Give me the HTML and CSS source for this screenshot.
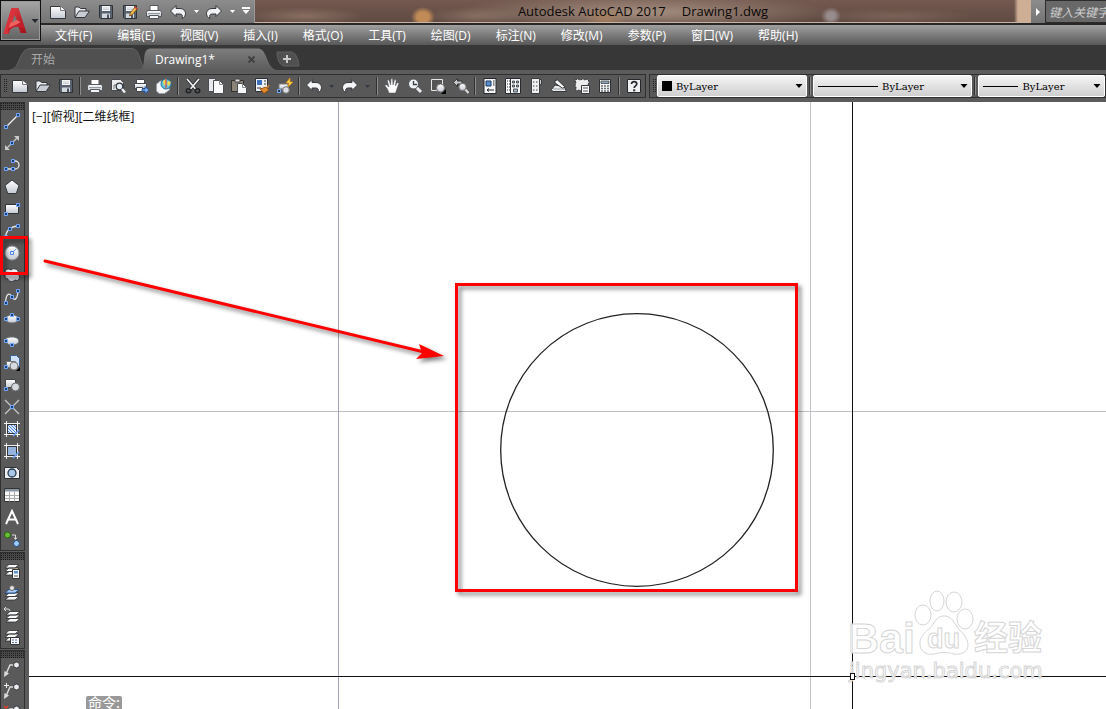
FILE: index.html
```html
<!DOCTYPE html>
<html lang="zh-CN">
<head>
<meta charset="utf-8">
<title>Autodesk AutoCAD 2017 - Drawing1.dwg</title>
<link rel="stylesheet" href="styles.css">
</head>
<body>
<svg class="defs" aria-hidden="true">
  <defs>
    <linearGradient id="g-white" x1="0" y1="0" x2="0" y2="1"><stop offset="0" stop-color="#fff"/><stop offset="1" stop-color="#c3c8d2"/></linearGradient>
    <linearGradient id="g-red" x1="0" y1="0" x2="1" y2="1"><stop offset="0" stop-color="#e8454a"/><stop offset="1" stop-color="#a30f18"/></linearGradient>
    <linearGradient id="g-tab" x1="0" y1="0" x2="0" y2="1"><stop offset="0" stop-color="#7e7e7e"/><stop offset="1" stop-color="#5c5c5c"/></linearGradient>
    <pattern id="hatch" width="3" height="3" patternUnits="userSpaceOnUse"><path fill="#dce8fb" d="M0 0h3v3H0z"/><path stroke="#4d7fd0" d="M0 0l3 3"/></pattern>
  </defs>
  <symbol id="new" viewBox="0 0 16 16"><path d="M.5 2.500h10l5 4v8H.5z" fill="url(#g-white)" stroke="#34373c"/><path d="M10.500 2.500v4h5" fill="#fff" stroke="#777"/></symbol>
  <symbol id="open" viewBox="0 0 16 16"><path d="M1 13V3h4l1.500 1.500H12V7" fill="#e8eaee" stroke="#34373c"/><path d="M1 13.500L5 7h10.500L11 13.500z" fill="#c8ccd4" stroke="#34373c"/></symbol>
  <symbol id="save" viewBox="0 0 16 16"><path d="M1.500 1.500h13v13h-12l-1-1z" fill="#59626f" stroke="#2f3338"/><path d="M4 2h8v5H4z" fill="#f4f6f8"/><path d="M5 4h6M5 5.500h6" stroke="#b5bbc5" stroke-width=".7"/><path d="M4 9.500h8V14H4z" fill="#d3d7de"/><path d="M9 10.500h2V14H9z" fill="#4b5361"/></symbol>
  <symbol id="saveas" viewBox="0 0 16 16"><use href="#save"/><path d="M7.500 12l1-3.500 5-6 2 2-5 6z" fill="#f3bd4e" stroke="#6f4215" stroke-width=".8"/><path d="M13 3l2 2" stroke="#d33" stroke-width="1.500"/></symbol>
  <symbol id="print" viewBox="0 0 16 16"><path d="M4 1.500h8V7H4z" fill="#fff" stroke="#55595f"/><path d="M1.500 6.500h13l1 2v4H.5v-4z" fill="url(#g-white)" stroke="#55595f"/><path d="M3.500 11.500h9v3h-9z" fill="#f3f4f6" stroke="#55595f"/><path d="M2 9.500h12" stroke="#9298a2"/></symbol>
  <symbol id="preview" viewBox="0 0 16 16"><path d="M1.500 1.500h9l3 3v8h-12z" fill="#e9ebef" stroke="#44484e"/><path d="M4 11V7h3" fill="none" stroke="#777"/><circle cx="9.500" cy="8.500" r="3.300" fill="#e4edf6" stroke="#33373d" stroke-width="1.300"/><path d="M12 11l3 3.500" stroke="#eef0f3" stroke-width="2.400"/></symbol>
  <symbol id="publish" viewBox="0 0 16 16"><path d="M3.500 1.500h8V6h-8z" fill="#fff" stroke="#44484e"/><path d="M1.500 5.500h12v5h-12z" fill="url(#g-white)" stroke="#44484e"/><path d="M3.500 9.500h6v4h-6z" fill="#fff" stroke="#44484e"/><path d="M9 11h3V8.500l4 3.700-4 3.300V13H9z" fill="#7eb0f3" stroke="#184c9c" stroke-width=".8"/></symbol>
  <symbol id="globe" viewBox="0 0 16 16"><path d="M.5 6l4-3h7l2 9-5 3.500H3L.5 13z" fill="#f5f6f8" stroke="#999da5"/><circle cx="10" cy="6" r="5" fill="#5fc4e2" stroke="#24749f"/><path d="M7 3l3-2v4L8 8zM12 3l3 1-2 4-2-2z" fill="#f3da46"/><path d="M10 .5v10" stroke="#e5483b" stroke-width="1.200"/></symbol>
  <symbol id="cut" viewBox="0 0 16 16"><path d="M2 1l9 10.500M14 1L5 11.500" stroke="#222528" stroke-width="3.200"/><path d="M2 1l9 10.500M14 1L5 11.500" stroke="#f2f3f5" stroke-width="1.700"/><g fill="none" stroke="#1f2225" stroke-width="1.500"><ellipse cx="3.500" cy="12.800" rx="2.200" ry="2"/><ellipse cx="12.500" cy="12.800" rx="2.200" ry="2"/></g></symbol>
  <symbol id="copy" viewBox="0 0 16 16"><path d="M.5.5h6l3 3v10h-9z" fill="#e7e9ed" stroke="#4a4e54"/><path d="M5.500 2.500h6l4 4v9h-10z" fill="#fbfbfc" stroke="#4a4e54"/><path d="M11.500 2.500v4h4" fill="none" stroke="#888"/></symbol>
  <symbol id="paste" viewBox="0 0 16 16"><path d="M.5 2.500h12v11H.5z" fill="#8c8379" stroke="#34312d"/><path d="M4 1h5v3H4z" fill="#ddd" stroke="#444"/><path d="M6.500 5.500h5l4 4v6h-9z" fill="#f6f7f8" stroke="#4a4e54"/><path d="M11.500 5.500v4h4" fill="none" stroke="#888"/></symbol>
  <symbol id="match" viewBox="0 0 16 16"><path d="M1.500.5h12v13h-12z" fill="#eef2f8" stroke="#2a3036"/><path d="M3 2h5v5H3z" fill="#3b6fbc"/><path d="M10 3h2M10 6h2M3 10h4" stroke="#333"/><path d="M6 11l6-2 3 3-5 3.500z" fill="#e08a2d" stroke="#8a4308" stroke-width=".8"/><path d="M13 10l2-3" stroke="#b87533" stroke-width="2"/></symbol>
  <symbol id="blockedit" viewBox="0 0 16 16"><path d="M2 6h9v5H2z" fill="url(#g-white)" stroke="#777"/><circle cx="9" cy="12" r="3.300" fill="#dadde4" stroke="#777"/><path d="M.5 11.500h3v3h-3z" fill="#27374f" stroke="#78aaf8"/><path d="M13 0l-4 5h3l-1 4 5-5h-3z" fill="#ffdc55" stroke="#d98908" stroke-width=".7"/></symbol>
  <symbol id="undo" viewBox="0 0 16 16"><path d="M.5 7L6 1.500V4.500h4c3 0 5.500 2 5.500 5 0 2-1 4-3.500 5 1-3 0-4.500-2-4.500H6v2.500z" fill="#f3f4f6" stroke="#34373c"/></symbol>
  <symbol id="redo" viewBox="0 0 16 16"><use href="#undo" transform="matrix(-1 0 0 1 16 0)"/></symbol>
  <symbol id="pan" viewBox="0 0 16 16"><path d="M5 15l-1.500-4L.8 7.500l1.500-.8L5 9 3.300 2.500l1.500-.7L6.700 7 7 .8h1.600L9 7l1.700-5.500 1.500.5L11.300 8l2.200-3.500 1.300.8L13 10.500 11.500 15z" fill="#fff" stroke="#55585d" stroke-width=".5"/></symbol>
  <symbol id="zoomrt" viewBox="0 0 16 16"><path d="M9 9l5 5" stroke="#e9ebee" stroke-width="3"/><circle cx="6.500" cy="6" r="5" fill="#eef0f2" stroke="#4d5157"/><path d="M6.500 3v3.500H10" fill="none" stroke="#3b3e42" stroke-width="1.300"/></symbol>
  <symbol id="zoomwin" viewBox="0 0 16 16"><path d="M1.500 1.500h11v11h-11z" fill="#555" stroke="#e7e7e7"/><circle cx="10.500" cy="10" r="4" fill="url(#g-white)" stroke="#777"/><path d="M16 11v5h-5z" fill="#000"/></symbol>
  <symbol id="zoomprev" viewBox="0 0 16 16"><path d="M0 4.500L4.500.5v2.500H9v3H4.500v2.500z" fill="#c5c8cc" stroke="#333"/><path d="M12 11l3.500 4" stroke="#dedede" stroke-width="2"/><circle cx="9.500" cy="9" r="3.600" fill="url(#g-white)" stroke="#777"/></symbol>
  <symbol id="props" viewBox="0 0 16 16"><path d="M2 .5h12v15H2z" fill="#f5f6f8" stroke="#26292d"/><path d="M4 3h5v5H4z" fill="#5e8bc9" stroke="#173965"/><path d="M11 3h1.500M11 5h1.500M11 7h1.500M5 12h7M5 12l2-1.500M5 12l2 1.500" stroke="#26292d"/></symbol>
  <symbol id="dcenter" viewBox="0 0 16 16"><path d="M.5.5h15v15H.5z" fill="#f5f6f8" stroke="#26292d"/><path d="M2 3h3M2 6h3M2 9h3M2 12h3" stroke="#333" stroke-dasharray="1 1"/><path d="M5.500 1v14" stroke="#333"/><path d="M7.500 3h2v2h-2zM11.500 3h2v2h-2zM7.500 7h2v2h-2zM11.500 7h2v2h-2zM8.500 11h4v3h-4z" fill="#9fb2c8" stroke="#333" stroke-width=".8"/></symbol>
  <symbol id="palette" viewBox="0 0 16 16"><path d="M3.500.5h8v15h-8z" fill="#eff0f2" stroke="#3a3d42"/><path d="M11.500 1.500h2v5h-2z" fill="#ccc" stroke="#3a3d42"/><path d="M5 3h1.500v2H5zM8 3h1.500v2H8zM5 7h1.500v2H5zM8 7h1.500v2H8zM5 11h1.500v2H5zM8 11h1.500v2H8z" fill="#999"/></symbol>
  <symbol id="sheet" viewBox="0 0 16 16"><path d="M.5 11.500L4 7l9 1.500 2.500 5h-14z" fill="#e8eaed" stroke="#33363a"/><path d="M4 2.500L6.500 2l7 6.500-1.500 2L4 5z" fill="#fafafa" stroke="#33363a"/><path d="M2 11h12" stroke="#999"/></symbol>
  <symbol id="markup" viewBox="0 0 16 16"><path d="M1 2l3-1 2 1 3-1 2 1 3-1 1 3-1 3-2 2 0 3-4 1-3-1-3 1L2 9.500 1 7l1-2z" fill="#ececec" stroke="#34373c" stroke-dasharray="2 1"/><path d="M7.500 7.500h8v8h-8z" fill="#f7f7f8" stroke="#34373c"/><path d="M9 10h5M9 13h5" stroke="#555"/></symbol>
  <symbol id="calc" viewBox="0 0 16 16"><path d="M2.500 1.500h11v13h-11z" fill="#f3f4f5" stroke="#2d3034"/><path d="M4 3h8v2.500H4z" fill="#8da5bd" stroke="#333" stroke-width=".7"/><path d="M4 8h8M4 10.500h8M4 13h8" stroke="#6a6d72" stroke-width="1.400" stroke-dasharray="2 1"/></symbol>
  <symbol id="help" viewBox="0 0 16 16"><path d="M1.500 1.500h13v13h-13z" fill="#eff0f2" stroke="#25282c"/><path d="M5.500 6C5.500 2.800 11 3 10.800 6 10.700 8 8.200 7.700 8.200 10" fill="none" stroke="#25282c" stroke-width="1.700"/><path d="M7.200 11.300h2v2h-2z" fill="#25282c"/></symbol>
  <symbol id="node" viewBox="0 0 4 4"><path d="M.5.5h3v3h-3z" fill="#1c3d78" stroke="#75a9fb"/></symbol>
  <symbol id="line" viewBox="0 0 16 16"><path d="M2 14L14 2" stroke="#f1f1f1" stroke-width="1.300"/><use href="#node" x="0" y="12" width="4" height="4"/><use href="#node" x="12" y="0" width="4" height="4"/></symbol>
  <symbol id="xline" viewBox="0 0 16 16"><path d="M3 13L13 3" stroke="#c9c9c9" stroke-width="1.300"/><path d="M10 1h5v5zM1 10v5h5z" fill="#c9c9c9"/><use href="#node" x="6" y="6" width="4" height="4"/></symbol>
  <symbol id="pline" viewBox="0 0 16 16"><path d="M2 12h9a4 4 0 0 0 0-8H9" fill="none" stroke="#e6e6e6" stroke-width="1.300"/><use href="#node" x="0" y="10" width="4" height="4"/><use href="#node" x="7" y="10" width="4" height="4"/><use href="#node" x="7" y="2" width="4" height="4"/></symbol>
  <symbol id="polygon" viewBox="0 0 16 16"><path d="M8 1l7 5.500-2.700 8H3.700L1 6.500z" fill="url(#g-white)" stroke="#34373c"/></symbol>
  <symbol id="rect" viewBox="0 0 16 16"><path d="M1.500 3.500h13v9h-13z" fill="url(#g-white)" stroke="#2e3136"/><use href="#node" x="0" y="11" width="4" height="4"/><use href="#node" x="12" y="2" width="4" height="4"/></symbol>
  <symbol id="arc" viewBox="0 0 16 16"><path d="M1.500 14C2 7 8 3 14 3" fill="none" stroke="#e3e3e3" stroke-width="1.300"/><use href="#node" x="0" y="12" width="4" height="4"/><use href="#node" x="4" y="4" width="4" height="4"/><use href="#node" x="12" y="1" width="4" height="4"/></symbol>
  <symbol id="circle" viewBox="0 0 16 16"><circle cx="8" cy="8" r="7" fill="url(#g-white)" stroke="#8d9199"/><path d="M8 8l4-4" stroke="#5791ef"/><path d="M6.500 6.500h3v3h-3z" fill="#dfe9fa" stroke="#4b86e8"/></symbol>
  <symbol id="cloud" viewBox="0 0 16 16"><path d="M2 7C-.5 3 3 .5 7 3c3-3 9 0 7 4 3 3 1 8-3 6-3 3-7 1-7-1-3-.5-4-3-2-5z" fill="url(#g-white)" stroke="#34373c"/></symbol>
  <symbol id="spline" viewBox="0 0 16 16"><path d="M1.500 14C2 3 6 4 8 8c2 4 5.500 3 6-6" fill="none" stroke="#e6e6e6" stroke-width="1.300"/><use href="#node" x="0" y="12" width="4" height="4"/><use href="#node" x="6" y="6" width="4" height="4"/><use href="#node" x="12" y="0" width="4" height="4"/></symbol>
  <symbol id="ellipse" viewBox="0 0 16 16"><ellipse cx="8" cy="8" rx="6.500" ry="4" fill="url(#g-white)" stroke="#6b6f75"/><use href="#node" x="0" y="6" width="4" height="4"/><use href="#node" x="6" y="2" width="4" height="4"/><use href="#node" x="12" y="6" width="4" height="4"/></symbol>
  <symbol id="ellarc" viewBox="0 0 16 16"><path d="M2 9C0 5 4 4 8 4c9 0 9 8 0 8C5 12 3 11 2 9z" fill="url(#g-white)" stroke="#6b6f75"/><use href="#node" x="0" y="6" width="4" height="4"/><use href="#node" x="6" y="10" width="4" height="4"/></symbol>
  <symbol id="insert" viewBox="0 0 16 16"><path d="M6.500.5h6l3 3v8h-9z" fill="#cfe0f7" stroke="#376396"/><path d="M2.500 6.500h9v6h-9z" fill="url(#g-white)" stroke="#777"/><circle cx="10" cy="11" r="4" fill="#d6d9df" stroke="#777"/><use href="#node" x="0" y="10" width="4" height="4"/><path d="M16 12v4h-4z" fill="#000"/></symbol>
  <symbol id="block" viewBox="0 0 16 16"><path d="M1.500 2.500h10v8h-10z" fill="url(#g-white)" stroke="#444"/><circle cx="11.500" cy="10" r="4" fill="#d6d9df" stroke="#666"/><use href="#node" x="0" y="10" width="4" height="4"/></symbol>
  <symbol id="point" viewBox="0 0 16 16"><path d="M1 1l14 14M1 15L15 1" stroke="#c9c9c9" stroke-width="1.200"/><use href="#node" x="6" y="6" width="4" height="4"/></symbol>
  <symbol id="hatchi" viewBox="0 0 16 16"><path d="M2.500 0v16M13.500 0v16M0 2.500h16M0 13.500h16" stroke="#f0f0f0"/><path d="M3.500 3.500h9v9h-9z" fill="url(#hatch)" stroke="#333"/><path d="M9 15l6-6" stroke="#68a0ff" stroke-width="1.500"/></symbol>
  <symbol id="gradi" viewBox="0 0 16 16"><path d="M2.500 0v16M13.500 0v16M0 2.500h16M0 13.500h16" stroke="#f0f0f0"/><path d="M3.500 3.500h9v9h-9z" fill="#94b3dd" stroke="#333"/><path d="M9 15l6-6" stroke="#68a0ff" stroke-width="1.500"/></symbol>
  <symbol id="region" viewBox="0 0 16 16"><path d="M.5 2.500h12l3 3v8H.5z" fill="#eceef1" stroke="#2c3035"/><circle cx="8" cy="8" r="4" fill="#a9c7e8" stroke="#26384e" stroke-width="1.300"/></symbol>
  <symbol id="table" viewBox="0 0 16 16"><path d="M.5 1.500h15v13H.5z" fill="#f8f8f8" stroke="#333"/><path d="M1 2h14v2.500H1z" fill="#8a95a4"/><path d="M5.500 4.500v10M10.500 4.500v10M1 8.500h14M1 11.500h14" stroke="#aaa"/></symbol>
  <symbol id="mtext" viewBox="0 0 16 16"><path d="M2 15L8 2l6 13M4.500 10.500h7" fill="none" stroke="#fff" stroke-width="2"/></symbol>
  <symbol id="addsel" viewBox="0 0 16 16"><circle cx="3.500" cy="4" r="3" fill="#69bd36" stroke="#24640c"/><circle cx="12.500" cy="12.500" r="3" fill="#9ecbff" stroke="#20497d"/><path d="M8 4h3.500v4M10 6.500l1.500 2 1.500-2" fill="none" stroke="#ddd"/></symbol>
  <symbol id="stack" viewBox="0 0 16 16"><path d="M5 8.500h10L11 12H1zM5 5h10l-4 3.500H1zM5 1.500h10L11 5H1z" fill="#fafafa" stroke="#2b2e32" stroke-width=".8"/></symbol>
  <symbol id="layerp" viewBox="0 0 16 16"><use href="#stack" width="16" height="16"/><path d="M8.500 6.500h7v9h-7z" fill="#f2f5fa" stroke="#333"/><path d="M10 8h4v2.500h-4z" fill="#5e93d7"/><path d="M10 13h4" stroke="#555"/></symbol>
  <symbol id="layercur" viewBox="0 0 16 16"><use href="#stack" y="3" width="16" height="16"/><path d="M5 4.500h10L11 8H1z" fill="#a7cbf7" stroke="#24528c"/><circle cx="8" cy="3" r="2.500" fill="#e6e6e6" stroke="#666"/></symbol>
  <symbol id="layerprev" viewBox="0 0 16 16"><use href="#stack" x="1" y="3" width="16" height="16"/><path d="M0 2h4q2 0 2 2M0 2l2-2M0 2l2 2" fill="none" stroke="#ddd"/></symbol>
  <symbol id="layerst" viewBox="0 0 16 16"><use href="#stack" width="16" height="16"/><path d="M6.500 8.500h9v7h-9z" fill="#f5f5f5" stroke="#333"/><path d="M8 11h6M8 13.500h6" stroke="#5877a8" stroke-dasharray="2 1"/></symbol>
  <symbol id="leader" viewBox="0 0 16 16"><path d="M2 13L6 4h5" fill="none" stroke="#ddd" stroke-width="1.400"/><path d="M0 16l.5-6L5 12.500z" fill="#ddd"/><circle cx="12.500" cy="4" r="3" fill="#e9ebef" stroke="#34373c"/></symbol>
  <symbol id="leaderadd" viewBox="0 0 16 16"><use href="#leader" width="16" height="16"/><path d="M0 2.500h5M2.500 0v5" stroke="#eee"/></symbol>
  <symbol id="leaderdel" viewBox="0 0 16 16"><use href="#leader" width="16" height="16"/><path d="M0 1l4 4M4 1L0 5" stroke="#e33e22" stroke-width="1.300"/></symbol>
  <symbol id="down" viewBox="0 0 7 4"><path d="M0 0h7L3.500 4z" fill="currentColor"/></symbol>
</svg>

<header class="header">
  <button class="app-button" aria-label="应用程序菜单">
    <svg class="app-logo" viewBox="0 0 24 28" aria-hidden="true"><path d="M8 1h7l8 25h-6l-2-6c-3-1-6 0-8 2l-2 5H0z" fill="url(#g-red)"/><path d="M11 8l-4 9c3-2 5-2 8-1z" fill="#777"/><path d="M8 1l5 1-4 12-5 13H0z" fill="#d9323a"/><path d="M5 20c5-5 10-5 15-2l1 4c-6-4-11-3-17 3z" fill="#c41f2a"/><path d="M7 16l6-3 4 2-3 2-9 4z" fill="#ee6260"/></svg>
    <svg class="arrow" aria-hidden="true"><use href="#down"/></svg>
  </button>
  <div class="titlebar">
    <div class="quick">
      <button class="q" aria-label="新建"><svg class="icon"><use href="#new"/></svg></button>
      <button class="q" aria-label="打开"><svg class="icon"><use href="#open"/></svg></button>
      <button class="q" aria-label="保存"><svg class="icon"><use href="#save"/></svg></button>
      <button class="q" aria-label="另存为"><svg class="icon"><use href="#saveas"/></svg></button>
      <button class="q" aria-label="打印"><svg class="icon"><use href="#print"/></svg></button>
      <button class="q" aria-label="放弃"><svg class="icon"><use href="#undo"/></svg></button>
      <button class="q q-small" aria-label="放弃列表"><svg class="tiny"><use href="#down"/></svg></button>
      <button class="q" aria-label="重做"><svg class="icon"><use href="#redo"/></svg></button>
      <button class="q q-small" aria-label="重做列表"><svg class="tiny"><use href="#down"/></svg></button>
      <button class="q q-menu" aria-label="自定义快速访问工具栏"><svg class="arrow"><use href="#down"/></svg></button>
    </div>
    <div class="caption"><span>Autodesk AutoCAD 2017</span><span>Drawing1.dwg</span></div>
    <div class="search">
      <button class="search-toggle" aria-label="展开搜索"><svg class="side-arrow" viewBox="0 0 4 8"><path d="M0 0v8l4-4z" fill="#fff"/></svg></button>
      <input class="search-box" type="text" aria-label="搜索" placeholder="键入关键字或短语">
    </div>
  </div>
  <nav class="menu" aria-label="菜单栏">
    <button>文件(F)</button><button>编辑(E)</button><button>视图(V)</button><button>插入(I)</button><button>格式(O)</button><button>工具(T)</button><button>绘图(D)</button><button>标注(N)</button><button>修改(M)</button><button>参数(P)</button><button>窗口(W)</button><button>帮助(H)</button>
  </nav>
</header>

<div class="tabs">
  <button class="tab"><svg class="tab-shape" viewBox="0 0 140 22" preserveAspectRatio="none" aria-hidden="true"><path d="M0 22C11 21 8 1 20 .5h102c10 .5 6 20 17 21.500z" fill="#505050" stroke="#616161"/></svg><span>开始</span></button>
  <button class="tab tab-active"><svg class="tab-shape" viewBox="0 0 140 22" preserveAspectRatio="none" aria-hidden="true"><path d="M0 22C11 21 1 1 13 .5h107c10 .5 8 20 19 21.500z" fill="url(#g-tab)"/></svg><span>Drawing1*</span><svg class="close" viewBox="0 0 7 7" aria-hidden="true"><path d="M.5.5l6 6M6.500.5l-6 6" stroke="#404040" stroke-width="2"/></svg></button>
  <button class="tab-add" aria-label="新图形"><svg class="add-shape" viewBox="0 0 24 16"><path d="M1 1h14c4 0 7 5 8 14H9C4 15 1 9 1 1z" fill="#505050" stroke="#606060"/><path d="M7 8h8M11 4v8" stroke="#c9c9c9" stroke-width="2"/></svg></button>
</div>

<div class="toolbars">
  <div class="toolbar" role="toolbar" aria-label="标准">
    <span class="grip"></span>
    <button class="t" aria-label="新建"><svg class="icon"><use href="#new"/></svg></button>
    <button class="t" aria-label="打开"><svg class="icon"><use href="#open"/></svg></button>
    <button class="t" aria-label="保存"><svg class="icon"><use href="#save"/></svg></button>
    <span class="sep"></span>
    <button class="t" aria-label="打印"><svg class="icon"><use href="#print"/></svg></button>
    <button class="t" aria-label="打印预览"><svg class="icon"><use href="#preview"/></svg></button>
    <button class="t" aria-label="发布"><svg class="icon"><use href="#publish"/></svg></button>
    <button class="t" aria-label="三维打印"><svg class="icon"><use href="#globe"/></svg></button>
    <span class="sep"></span>
    <button class="t" aria-label="剪切"><svg class="icon"><use href="#cut"/></svg></button>
    <button class="t" aria-label="复制"><svg class="icon"><use href="#copy"/></svg></button>
    <button class="t" aria-label="粘贴"><svg class="icon"><use href="#paste"/></svg></button>
    <button class="t" aria-label="特性匹配"><svg class="icon"><use href="#match"/></svg></button>
    <button class="t" aria-label="块编辑器"><svg class="icon"><use href="#blockedit"/></svg></button>
    <span class="sep"></span>
    <button class="t" aria-label="放弃"><svg class="icon"><use href="#undo"/></svg></button>
    <button class="t t-small" aria-label="放弃列表"><svg class="tiny"><use href="#down"/></svg></button>
    <button class="t" aria-label="重做"><svg class="icon"><use href="#redo"/></svg></button>
    <button class="t t-small" aria-label="重做列表"><svg class="tiny"><use href="#down"/></svg></button>
    <span class="sep"></span>
    <button class="t" aria-label="平移"><svg class="icon"><use href="#pan"/></svg></button>
    <button class="t" aria-label="实时缩放"><svg class="icon"><use href="#zoomrt"/></svg></button>
    <button class="t" aria-label="窗口缩放"><svg class="icon"><use href="#zoomwin"/></svg></button>
    <button class="t" aria-label="缩放上一个"><svg class="icon"><use href="#zoomprev"/></svg></button>
    <span class="sep"></span>
    <button class="t" aria-label="特性"><svg class="icon"><use href="#props"/></svg></button>
    <button class="t" aria-label="设计中心"><svg class="icon"><use href="#dcenter"/></svg></button>
    <button class="t" aria-label="工具选项板"><svg class="icon"><use href="#palette"/></svg></button>
    <button class="t" aria-label="图纸集管理器"><svg class="icon"><use href="#sheet"/></svg></button>
    <button class="t" aria-label="标记集管理器"><svg class="icon"><use href="#markup"/></svg></button>
    <button class="t" aria-label="快速计算器"><svg class="icon"><use href="#calc"/></svg></button>
    <span class="sep"></span>
    <button class="t" aria-label="帮助"><svg class="icon"><use href="#help"/></svg></button>
  </div>
  <div class="toolbar toolbar-props" role="toolbar" aria-label="特性">
    <span class="grip"></span>
    <div class="combo combo-color"><span class="swatch"></span><select aria-label="颜色"><option>ByLayer</option></select><svg class="arrow"><use href="#down"/></svg></div>
    <span class="sep"></span>
    <div class="combo combo-type"><span class="stroke"></span><select aria-label="线型"><option>ByLayer</option></select><svg class="arrow"><use href="#down"/></svg></div>
    <span class="sep"></span>
    <div class="combo combo-weight"><span class="stroke"></span><select aria-label="线宽"><option>ByLayer</option></select><svg class="arrow"><use href="#down"/></svg></div>
  </div>
</div>

<main class="workspace">
  <aside class="side">
    <div class="panel" role="toolbar" aria-label="绘图">
      <span class="grip-h"></span>
      <button aria-label="直线"><svg class="icon"><use href="#line"/></svg></button>
      <button aria-label="构造线"><svg class="icon"><use href="#xline"/></svg></button>
      <button aria-label="多段线"><svg class="icon"><use href="#pline"/></svg></button>
      <button aria-label="多边形"><svg class="icon"><use href="#polygon"/></svg></button>
      <button aria-label="矩形"><svg class="icon"><use href="#rect"/></svg></button>
      <button aria-label="圆弧"><svg class="icon"><use href="#arc"/></svg></button>
      <button aria-label="圆"><svg class="icon"><use href="#circle"/></svg></button>
      <button aria-label="修订云线"><svg class="icon"><use href="#cloud"/></svg></button>
      <button aria-label="样条曲线"><svg class="icon"><use href="#spline"/></svg></button>
      <button aria-label="椭圆"><svg class="icon"><use href="#ellipse"/></svg></button>
      <button aria-label="椭圆弧"><svg class="icon"><use href="#ellarc"/></svg></button>
      <button aria-label="插入块"><svg class="icon"><use href="#insert"/></svg></button>
      <button aria-label="创建块"><svg class="icon"><use href="#block"/></svg></button>
      <button aria-label="点"><svg class="icon"><use href="#point"/></svg></button>
      <button aria-label="图案填充"><svg class="icon"><use href="#hatchi"/></svg></button>
      <button aria-label="渐变色"><svg class="icon"><use href="#gradi"/></svg></button>
      <button aria-label="面域"><svg class="icon"><use href="#region"/></svg></button>
      <button aria-label="表格"><svg class="icon"><use href="#table"/></svg></button>
      <button aria-label="多行文字"><svg class="icon"><use href="#mtext"/></svg></button>
      <button aria-label="添加选定对象"><svg class="icon"><use href="#addsel"/></svg></button>
    </div>
    <div class="panel" role="toolbar" aria-label="图层">
      <span class="grip-h"></span>
      <button aria-label="图层特性"><svg class="icon"><use href="#layerp"/></svg></button>
      <button aria-label="置为当前"><svg class="icon"><use href="#layercur"/></svg></button>
      <button aria-label="上一个图层"><svg class="icon"><use href="#layerprev"/></svg></button>
      <button aria-label="图层状态"><svg class="icon"><use href="#layerst"/></svg></button>
    </div>
    <div class="panel" role="toolbar" aria-label="多重引线">
      <span class="grip-h"></span>
      <button aria-label="多重引线"><svg class="icon"><use href="#leader"/></svg></button>
      <button aria-label="添加引线"><svg class="icon"><use href="#leaderadd"/></svg></button>
      <button aria-label="删除引线"><svg class="icon"><use href="#leaderdel"/></svg></button>
    </div>
  </aside>
  <section class="canvas" aria-label="绘图区">
    <svg class="drawing">
      <g shape-rendering="crispEdges">
        <path d="M0 309.500h3000" stroke="#bebec4"/>
        <path d="M309.500 0v3000" stroke="#a4a4b4"/>
        <path d="M781.500 0v3000" stroke="#c4c4c8"/>
        <path d="M0 574.500h3000M823.500 0v3000" stroke="#111"/>
      </g>
      <circle cx="608" cy="348" r="136.300" fill="none" stroke="#222" stroke-width="1.300"/>
      <g class="watermark">
        <text class="wm-latin" x="819" y="551">Bai</text>
        <text class="wm-cn" x="945" y="548">经验</text>
        <ellipse cx="894" cy="513" rx="8" ry="10"/><ellipse cx="908" cy="499" rx="7" ry="10"/><ellipse cx="925" cy="500" rx="8" ry="10"/><ellipse cx="936" cy="517" rx="8" ry="10"/>
        <path d="M915 514c-8 0-9 7-14 12-6 5-11 10-10 17 1 8 8 10 14 9 7-2 13-2 20 0 7 1 14-2 14-9 0-7-5-11-10-17-4-5-6-12-14-12z"/>
        <text class="wm-du" x="898" y="546">du</text>
        <text class="wm-url" x="820" y="576">jingyan.baidu.com</text>
      </g>
      <path d="M821.500 571.500h4v6h-4z" fill="#fff" stroke="#111" shape-rendering="crispEdges"/>
    </svg>
    <div class="view-controls"><button>[−]</button><button>[俯视]</button><button>[二维线框]</button></div>
    <output class="command">命令:</output>
  </section>
  <svg class="callouts" aria-hidden="true">
    <g fill="none" stroke="#f00" stroke-width="3">
      <path d="M1.500 135.500h25v36h-25z"/>
      <path d="M456.500 182.500h340v306h-340z"/>
      <path d="M45 159l379 91" stroke-linecap="round"/>
    </g>
    <path d="M444 254l-28 3 6-6-3-9z" fill="#f00"/>
  </svg>
</main>
</body>
</html>
```
FILE: styles.css
```css
* { box-sizing: border-box; }

body {
  margin: 0;
  height: 100vh;
  display: flex;
  flex-direction: column;
  overflow: hidden;
  background: #5c5c5c;
  font-family: "Open Sans", "Noto Sans CJK SC", sans-serif;
  font-size: 12px;
}

button {
  display: flex;
  align-items: center;
  justify-content: center;
  padding: 0;
  border: 0;
  background: none;
  color: inherit;
  font: inherit;
}

.defs { position: absolute; width: 0; height: 0; }
.icon { width: 16px; height: 16px; flex: none; }
.arrow { width: 8px; height: 4px; flex: none; }
.tiny { width: 5px; height: 3px; flex: none; }

/* Title and menu */
.header {
  display: grid;
  grid-template-columns: 41px 1fr;
  grid-template-rows: 25px 20px;
  flex: none;
  background: #5a5a5a;
}
.app-button {
  grid-row: 1 / 3;
  height: 41px;
  gap: 3px;
  border: 1px solid #111;
  background: linear-gradient(#a5a5a5, #636363);
  box-shadow: inset 0 0 0 1px #999;
  color: #26292e;
}
.app-logo { width: 25px; height: 28px; }
.titlebar {
  display: flex;
  min-width: 0;
  border-bottom: 2px solid #2a2625;
}
.quick {
  display: flex;
  flex: none;
  padding-left: 5px;
  background: linear-gradient(#8c8c8c, #747474);
  border-right: 1px solid #999;
  color: #fff;
}
.q { width: 24px; }
.q-small { width: 12px; }
.q-menu { width: 16px; }
.q-menu::before {
  content: "";
  position: absolute;
  width: 8px;
  height: 2px;
  margin-bottom: 8px;
  background: #fff;
}
.caption {
  flex: 1;
  display: flex;
  align-items: center;
  justify-content: center;
  gap: 16px;
  border-bottom: 1px solid #c9b3a5;
  white-space: nowrap;
  color: #0b0908;
  background:
    radial-gradient(12px 10px at 168px 17px, #c08b56 50%, transparent),
    radial-gradient(22px 10px at 350px 18px, #a5805f, transparent),
    radial-gradient(190px 18px at 50% 12px, #a58f80, transparent),
    radial-gradient(60px 9px at 50px 16px, #896e61, transparent),
    radial-gradient(50px 9px at 220px 16px, #846b5f, transparent),
    radial-gradient(10px 9px at 576px 16px, #978b8c 40%, transparent),
    radial-gradient(80px 8px at 640px 16px, #7b6257, transparent),
    linear-gradient(90deg, transparent calc(100% - 17px), #cfae96 calc(100% - 13px)),
    linear-gradient(#745950, #5f4a42);
  font-size: 13px;
}
.search { display: flex; flex: none; }
.search-toggle {
  width: 14px;
  background: linear-gradient(#8c8c8c, #747474);
}
.side-arrow { width: 4px; height: 8px; }
.search-box {
  width: 61px;
  padding: 0 0 0 3px;
  border: 1px solid #2c2c2c;
  border-right: 0;
  border-radius: 0;
  background: #686868;
  color: #ddd;
  font: italic 12px "Noto Sans CJK SC", sans-serif;
}
.search-box::placeholder { color: #cfcfcf; opacity: 1; }
.menu {
  display: flex;
  gap: 25px;
  padding-left: 14px;
  background: linear-gradient(#a0a0a0, #585858);
  color: #fff;
  white-space: nowrap;
}

/* File tabs */
.tabs {
  display: flex;
  align-items: flex-end;
  flex: none;
  height: 25px;
  padding-left: 10px;
  background: #373737;
}
.tab {
  position: relative;
  width: 128px;
  height: 22px;
  justify-content: flex-start;
  padding-left: 21px;
  color: #aaa;
}
.tab-active {
  width: 138px;
  padding-left: 17px;
  color: #fff;
}
.tab span { position: relative; }
.tab-shape {
  position: absolute;
  left: 0;
  top: 0;
  width: 140px;
  height: 22px;
}
.close {
  position: relative;
  width: 7px;
  height: 7px;
  margin: 0 21px 0 auto;
}
.tab-add { height: 19px; align-items: flex-start; }
.add-shape { width: 24px; height: 16px; }

/* Toolbars */
.toolbars {
  display: flex;
  gap: 3px;
  flex: none;
  padding: 4px 0;
}
.toolbar {
  display: flex;
  align-items: center;
  flex: none;
  height: 24px;
  border: 1px solid #303030;
  background: #585858;
}
.grip {
  width: 4px;
  height: 14px;
  margin: 0 1px 0 2px;
  background: conic-gradient(#222 25%, transparent 0) 0 0 / 2px 2px;
}
.t { width: 23px; height: 20px; }
.t-small { width: 13px; color: #343a44; }
.sep {
  width: 6px;
  height: 18px;
  background: linear-gradient(90deg, transparent 2px, #303030 2px, #303030 3px, #8c8c8c 3px, #8c8c8c 4px, transparent 4px);
}
.toolbar-props { flex: 1; min-width: 0; }
.combo {
  position: relative;
  display: flex;
  align-items: center;
  gap: 4px;
  height: 22px;
  padding: 0 3px 0 4px;
  border: 1px solid #fff;
  border-radius: 2px;
  background: linear-gradient(#f4f4f4, #cfcfcf);
}
.combo select {
  flex: 1;
  min-width: 0;
  padding: 0;
  border: 0;
  appearance: none;
  background: none;
  color: #000;
  font: 10px "DejaVu Serif", serif;
}
.combo-color { flex: 150; }
.combo-type { flex: 160; }
.combo-weight { flex: 125; }
.swatch { width: 10px; height: 10px; background: #000; }
.stroke { width: 60px; height: 1px; background: #000; }
.combo-weight .stroke { width: 35px; }

/* Workspace */
.workspace {
  position: relative;
  display: flex;
  flex: 1;
  min-height: 0;
}
.side {
  display: flex;
  flex-direction: column;
  gap: 1px;
  flex: none;
  width: 29px;
  overflow: hidden;
}
.panel {
  flex: none;
  width: 25px;
  border: 1px solid #303030;
  background: #5a5a5a;
}
.panel button { width: 22px; height: 22px; }
.grip-h {
  display: block;
  height: 7px;
  background: conic-gradient(#1d1d1d 25%, transparent 0) 3px 2px / 2px 2px, #484848;
}
.canvas {
  position: relative;
  display: flex;
  flex: 1;
  flex-direction: column;
  align-items: flex-start;
  justify-content: space-between;
  min-width: 0;
  overflow: hidden;
  background: #fff;
}
.drawing, .callouts {
  position: absolute;
  left: 0;
  top: 0;
  width: 100%;
  height: 100%;
}
.callouts {
  pointer-events: none;
  filter: drop-shadow(3px 3px 2px rgba(0, 0, 0, .5));
}
.watermark { fill: rgba(255, 255, 255, .9); stroke: #d6d6d6; stroke-width: 1; }
.wm-latin { font: bold 43px "Liberation Sans", sans-serif; }
.wm-cn { font: bold 34px "Noto Sans CJK SC", sans-serif; }
.wm-du { font: bold 27px "Liberation Sans", sans-serif; }
.wm-url { font: 21px "DejaVu Sans", sans-serif; }
.view-controls {
  position: relative;
  display: flex;
  padding: 5px 3px;
  color: #111;
}
.command {
  position: relative;
  height: 13px;
  margin-left: 57px;
  padding: 0 2px;
  border-radius: 2px 2px 0 0;
  background: #999;
  color: #fff;
  font: 14px/13px "Noto Sans CJK SC", sans-serif;
}
```
